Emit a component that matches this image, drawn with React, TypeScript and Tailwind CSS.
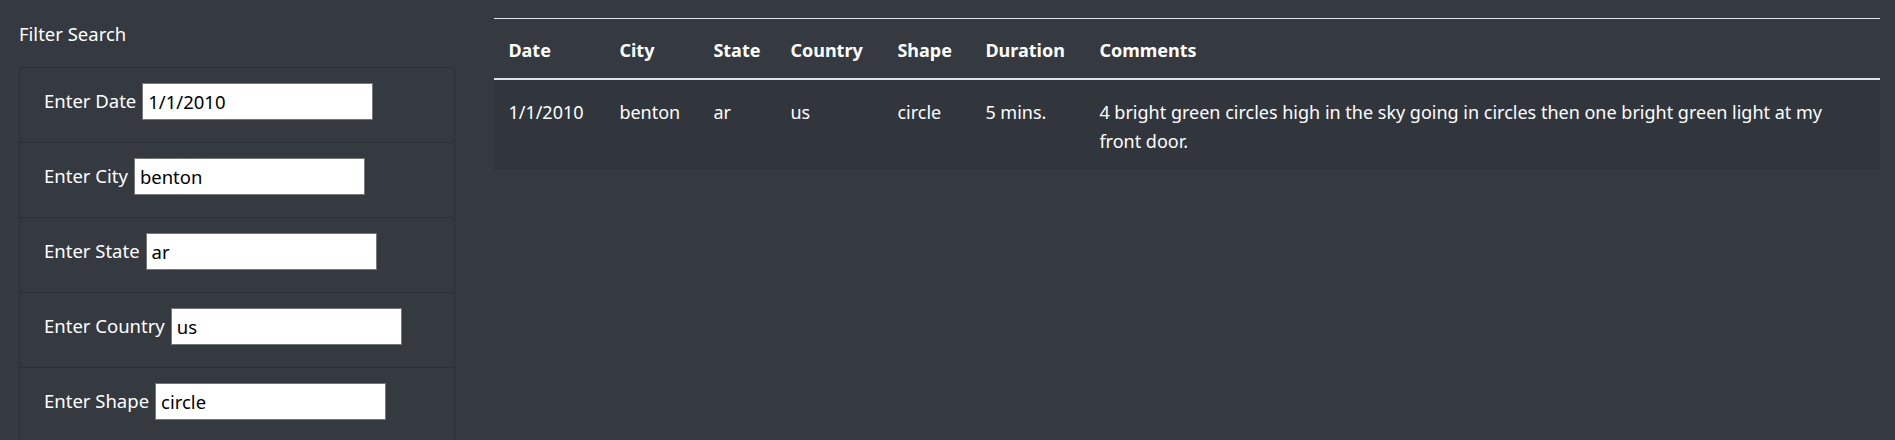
import { useState } from 'react'

const filters = [
  { label: 'Enter Date', value: '1/1/2010' },
  { label: 'Enter City', value: 'benton' },
  { label: 'Enter State', value: 'ar' },
  { label: 'Enter Country', value: 'us' },
  { label: 'Enter Shape', value: 'circle' },
]

const columns = [
  { name: 'Date', w: 'w-[111px]' },
  { name: 'City', w: 'w-[94px]' },
  { name: 'State', w: 'w-[77px]' },
  { name: 'Country', w: 'w-[107px]' },
  { name: 'Shape', w: 'w-[88px]' },
  { name: 'Duration', w: 'w-[114px]' },
  { name: 'Comments', w: '' },
]

const rows = [
  [
    '1/1/2010', 'benton', 'ar', 'us', 'circle', '5 mins.',
    '4 bright green circles high in the sky going in circles then one bright green light at my front door.',
  ],
]

export default function App() {
  const [values, setValues] = useState(filters.map(f => f.value))

  return (
    <div className="min-h-screen bg-[#343a40] text-white font-['Segoe_UI','Noto_Sans',sans-serif] text-[18px] leading-[28.8px]">
      <div className="flex">
        {/* filter column */}
        <div className="w-[475px] shrink-0 pl-[19px] pr-[20px] pt-[20px]">
          <h4 className="text-[18.5px]">Filter Search</h4>
          <ul className="mt-[18px] rounded-t-[4px] border border-[#2b3036] border-b-0">
            {filters.map((f, i) => (
              <li key={f.label}
                className="h-[75px] px-[24px] pt-[15px] border-b border-[#2b3036] last:border-b-0">
                <div className="flex h-[37px] items-center">
                  <label htmlFor={`f${i}`} className="text-[18.5px]">{f.label}</label>
                  <input
                    id={`f${i}`} type="text" value={values[i]}
                    onChange={e => setValues(v => v.map((x, j) => (j === i ? e.target.value : x)))}
                    className="ml-[6px] w-[231px] h-[37px] bg-white border-[1.5px] border-[#767676] px-[5px] text-black text-[18.5px] outline-none"
                  />
                </div>
              </li>
            ))}
          </ul>
        </div>

        {/* results table */}
        <div className="flex-1 pl-[19px] pr-[15px] pt-[18px]">
          <table className="w-full border-collapse text-left">
            <thead>
              <tr className="border-t border-[#dee2e6] border-b-2">
                {columns.map(c => (
                  <th key={c.name} className={`${c.w} px-[14.4px] pt-[17px] pb-[13px] font-bold align-bottom`}>
                    {c.name}
                  </th>
                ))}
              </tr>
            </thead>
            <tbody>
              {rows.map((r, i) => (
                <tr key={i} className="bg-[#31363c]">
                  {r.map((cell, j) => (
                    <td key={j} className="px-[14.4px] pt-[18px] pb-[15px] align-top">{cell}</td>
                  ))}
                </tr>
              ))}
            </tbody>
          </table>
        </div>
      </div>
    </div>
  )
}
